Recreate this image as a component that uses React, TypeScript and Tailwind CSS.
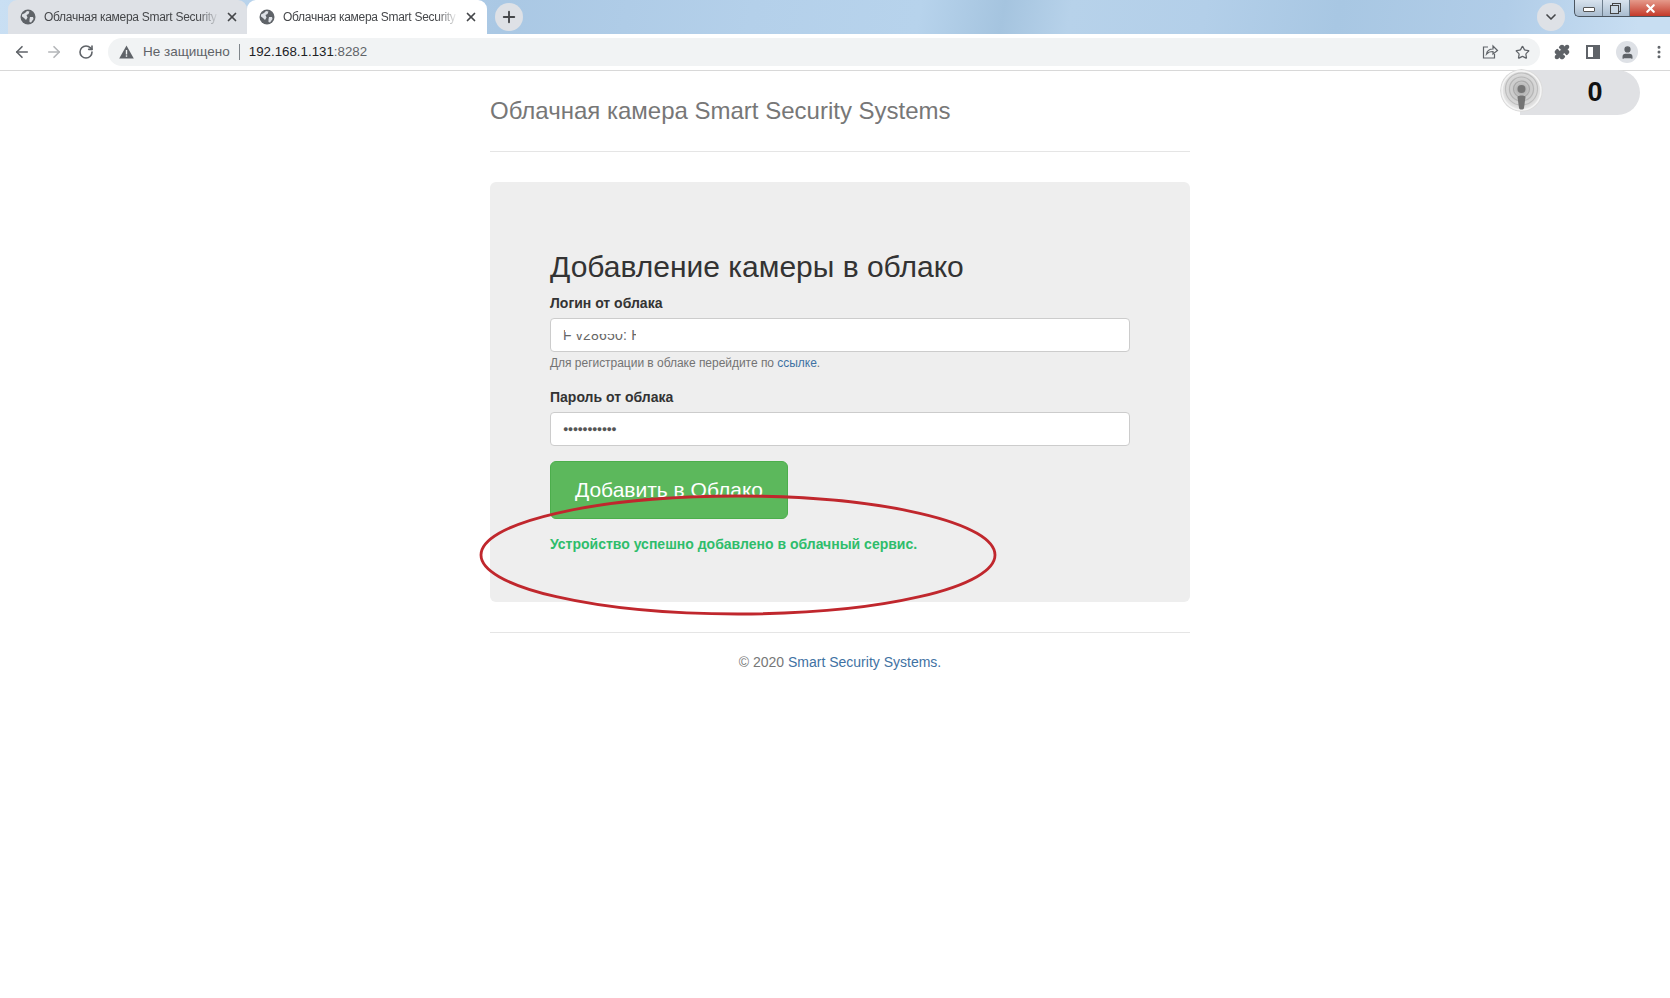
import React from "react";
import { ArrowLeft, ArrowRight, RotateCw, X, Plus, ChevronDown, Star, Puzzle, EllipsisVertical, User } from "lucide-react";

function Globe() {
  return (
    <svg width="16" height="16" viewBox="0 0 16 16" className="shrink-0">
      <circle cx="8" cy="8" r="7.5" fill="#5f6368" />
      <path d="M2 5.5 L5 4 L7 2 L9.5 2.5 L8.5 5 L6.5 6 L7.5 8.5 L6 11 L4 9 L2 7.5Z M10 8 L13 8 L13.5 10 L11 13.5 L9.5 13 L9.5 10.5Z" fill="#dee1e6" />
    </svg>
  );
}

function Tab({ active }: { active?: boolean }) {
  return (
    <div className={"relative flex h-[34px] items-center rounded-t-[9px] pl-[12px] pr-[8px] " + (active ? "w-[240px] bg-white" : "w-[239px] bg-[#dee1e6]")}>
      <Globe />
      <span className="ml-[8px] w-[175px] whitespace-nowrap text-[12px] tracking-[-0.28px] text-[#45474a] [mask-image:linear-gradient(to_right,black_88%,transparent_100%)]">
        Облачная камера Smart Security
      </span>
      <X size={14} strokeWidth={3} className="ml-[6px] text-[#45474a]" />
    </div>
  );
}

function Podcast() {
  return (
    <div className="absolute left-[1500px] top-[69px] h-[43px] w-[43px] overflow-hidden rounded-full">
      <svg width="43" height="43" viewBox="0 0 43 43">
        <defs>
          <radialGradient id="pg" cx="50%" cy="48%" r="52%">
            <stop offset="0%" stopColor="#a0a0a0" />
            <stop offset="40%" stopColor="#c9c9c9" />
            <stop offset="85%" stopColor="#dedede" />
            <stop offset="100%" stopColor="#ececec" />
          </radialGradient>
        </defs>
        <circle cx="21.5" cy="21.5" r="21.5" fill="#dcdcdc" />
        <circle cx="21.5" cy="21.5" r="19.5" fill="url(#pg)" stroke="#f5f5f5" strokeWidth="1.5" />
        <circle cx="21.5" cy="20" r="16" fill="none" stroke="#bebebe" strokeWidth="1.2" />
        <circle cx="21.5" cy="20" r="12" fill="none" stroke="#b6b6b6" strokeWidth="1.2" />
        <circle cx="21.5" cy="20" r="8" fill="none" stroke="#a8a8a8" strokeWidth="1.2" />
        <circle cx="21.5" cy="20" r="4" fill="#767676" />
        <path d="M17.5 28c0-2 8-2 8 0l-1.500 11c-.3 2-4.700 2-5 0Z" fill="#747474" />
      </svg>
    </div>
  );
}

export default function App() {
  return (
    <div className="relative min-h-[998px] w-full overflow-hidden bg-white font-['Liberation_Sans',Arial,sans-serif] text-[14px] text-[#333]">
      {/* tab strip */}
      <div className="relative flex h-[34px] items-end bg-[linear-gradient(100deg,#c9dff3_0%,#b8d3ec_15%,#aac8e4_30%,#b4d0ea_45%,#b7d3ec_55%,#a5c4df_60%,#b7d2ea_64%,#b3cfe9_72%,#a8c7e3_80%,#b1cde8_90%,#c8def2_98%)] pl-[8px]">
        <Tab />
        <Tab active />
        <div className="ml-[8px] flex h-[28px] w-[28px] items-center justify-center self-center rounded-full bg-[#dee1e6]">
          <Plus size={18} strokeWidth={2.5} className="text-[#45474a]" />
        </div>
        <div className="absolute left-[1537px] top-[3px] flex h-[28px] w-[28px] items-center justify-center rounded-full bg-[#dee1e6]">
          <ChevronDown size={16} strokeWidth={2.5} className="text-[#45474a]" />
        </div>
        <div className="absolute right-0 top-0 flex h-[17px] w-[96px] overflow-hidden rounded-bl-[5px] border-b border-l border-[#4a5560] bg-[linear-gradient(to_bottom,#d8e3ee,#a9bccf)]">
          <div className="flex w-[28px] items-center justify-center border-r border-[#6d7d8c]">
            <div className="mt-[3px] h-[5px] w-[12px] rounded-[1px] border border-[#555] bg-white" />
          </div>
          <div className="relative flex w-[27px] items-center justify-center border-r border-[#6d7d8c]">
            <div className="absolute left-[9px] top-[3px] h-[9px] w-[9px] border border-[#444]" />
            <div className="absolute left-[7px] top-[5px] h-[9px] w-[9px] border border-[#444] bg-[#c9d7e4]" />
          </div>
          <div className="flex flex-1 items-center justify-center bg-[linear-gradient(to_bottom,#e59a8b,#c43a2a)]">
            <X size={13} strokeWidth={4} className="text-white" />
          </div>
        </div>
      </div>

      {/* toolbar */}
      <div className="flex h-[37px] items-center border-b border-[#d8d8d8] bg-white">
        <ArrowLeft size={18} strokeWidth={2.2} className="ml-[13px] text-[#5f6368]" />
        <ArrowRight size={18} strokeWidth={2.2} className="ml-[14px] text-[#b4b6b9]" />
        <RotateCw size={16} strokeWidth={2.4} className="ml-[15px] text-[#5f6368]" />
        <div className="ml-[14px] flex h-[28px] w-[1432px] items-center rounded-full bg-[#f1f3f4] pl-[11px]">
          <svg width="15" height="14" viewBox="0 0 15 14" className="shrink-0">
            <path d="M7.5 0.5 L14.8 13.5 H0.2 Z" fill="#5f6368" />
            <rect x="6.8" y="5" width="1.4" height="4.5" fill="#f1f3f4" />
            <rect x="6.8" y="10.3" width="1.4" height="1.5" fill="#f1f3f4" />
          </svg>
          <span className="ml-[9px] text-[13.5px] text-[#5f6368]">Не защищено</span>
          <span className="mx-[9px] h-[16px] w-px bg-[#80868b]" />
          <span className="text-[13.3px] text-[#202124]">
            192.168.1.131<span className="text-[#5f6368]">:8282</span>
          </span>
          <svg width="18" height="18" viewBox="0 0 18 18" fill="none" stroke="#5f6368" strokeWidth="1.2" className="ml-auto mr-[16px]">
            <path d="M7 4H2.5v11h11v-4" />
            <path d="M5.5 11c.5-3 2.5-5 6.5-5V3l4.5 4.500L12 11V8.500c-3 0-5 .8-6.500 2.500Z" />
          </svg>
          <Star size={15} strokeWidth={2} className="mr-[10px] text-[#5f6368]" />
        </div>
        <Puzzle size={16} fill="#5f6368" className="ml-[14px] text-[#5f6368]" />
        <div className="ml-[16px] flex h-[14px] w-[14px] justify-start border-2 border-[#5f6368] bg-white">
          <div className="ml-auto h-full w-[5px] bg-[#5f6368]" />
        </div>
        <div className="ml-[16px] flex h-[22px] w-[22px] items-center justify-center rounded-full bg-[#dee1e6]">
          <User size={15} fill="#5f6368" className="text-[#5f6368]" />
        </div>
        <EllipsisVertical size={16} strokeWidth={2.5} className="ml-[13px] text-[#5f6368]" />
      </div>

      {/* page */}
      <main className="ml-[490px] w-[700px]">
        <h3 className="mt-[27px] text-[24px] leading-[26px] text-[#777]">Облачная камера Smart Security Systems</h3>
        <div className="mt-[27px] border-t border-[#e5e5e5]" />

        <section className="mt-[30px] h-[420px] rounded-[6px] bg-[#eeeeee] px-[60px] pt-[68px]">
          <h2 className="text-[30px] leading-[33px] text-[#333]">Добавление камеры в облако</h2>
          <label className="mt-[10px] block text-[14px] font-bold leading-[20px]">Логин от облака</label>
          <div className="relative mt-[5px] flex h-[34px] items-center rounded-[4px] border border-[#ccc] bg-white pl-[12px] text-[14px] text-[#666]">
            <span className="tracking-[0.2px]">F v28650: H</span>
            <span className="absolute left-[20px] top-[8px] h-[7px] w-[52px] bg-white" />
            <span className="absolute left-[14px] top-[8px] h-[5px] w-[8px] bg-white" />
            <span className="absolute left-[85px] top-[8px] h-[17px] w-[9px] bg-white" />
          </div>
          <p className="mt-[3px] text-[12px] leading-[17px] tracking-[-0.03px] text-[#737373]">
            Для регистрации в облаке перейдите по <span className="text-[#3f72a3]">ссылке</span>.
          </p>
          <label className="mt-[15px] block text-[14px] font-bold leading-[20px]">Пароль от облака</label>
          <div className="mt-[5px] flex h-[34px] items-center rounded-[4px] border border-[#ccc] bg-white pl-[12px] text-[#555]">
            <span className="text-[9px] leading-none tracking-[-0.6px]">●●●●●●●●●●●</span>
          </div>
          <button className="mt-[15px] h-[58px] w-[238px] rounded-[6px] border border-[#4cae4c] bg-[#5cb85c] text-[21px] text-white">
            Добавить в Облако
          </button>
          <p className="mt-[15px] text-[14px] font-bold leading-[20px] text-[#2ebd6b]">Устройство успешно добавлено в облачный сервис.</p>
        </section>

        <div className="mt-[30px] border-t border-[#e5e5e5]" />
        <p className="mt-[19px] text-center text-[14px] leading-[20px] text-[#777]">
          © 2020 <span className="text-[#3f72a3]">Smart Security Systems.</span>
        </p>
      </main>

      {/* overlays */}
      <div className="absolute left-[1520px] top-[70px] flex h-[45px] w-[120px] items-center justify-center rounded-r-full bg-[#e0e1e4] pl-[30px] text-[27px] font-bold text-[#111]">
        0
      </div>
      <Podcast />
      <svg className="pointer-events-none absolute left-[473px] top-[490px]" width="530" height="130" viewBox="0 0 530 130" fill="none">
        <ellipse cx="265" cy="65" rx="257" ry="59" stroke="#c0272d" strokeWidth="2.8" />
      </svg>
    </div>
  );
}
